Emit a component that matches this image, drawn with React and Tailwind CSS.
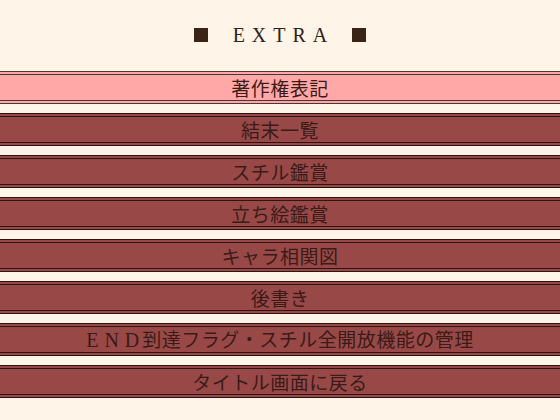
import React from 'react';

const items = [
  { label: '著作権表記', active: true },
  { label: '結末一覧' },
  { label: 'スチル鑑賞' },
  { label: '立ち絵鑑賞' },
  { label: 'キャラ相関図' },
  { label: '後書き' },
  { label: 'END到達フラグ・スチル全開放機能の管理', latin: 'END' },
  { label: 'タイトル画面に戻る' },
];

function MenuBand({ item }) {
  const text = item.latin ? item.label.slice(item.latin.length) : item.label;
  return (
    <div
      className={`h-[33px] flex items-center justify-center border-y-[4px] border-double ${
        item.active
          ? 'bg-[#ffa8a7] border-y-[#4e3434]'
          : 'bg-[#984847] border-y-[#2e1514]'
      }`}
    >
      <span className="text-[19px] leading-none tracking-[0.5px] text-[#3a1b17] font-['Noto_Sans_CJK_JP',sans-serif] -mt-[1px]">
        {item.latin && (
          <span className="font-['Liberation_Serif',serif] text-[20px] tracking-[6px] mr-[-3px]">
            {item.latin}
          </span>
        )}
        {text}
      </span>
    </div>
  );
}

export default function App() {
  return (
    <div className="w-[560px] h-[420px] bg-[#fef4e8] overflow-hidden">
      {/* Title */}
      <div className="h-[71px] flex items-center justify-center pb-[1px]">
        <div className="w-[14px] h-[14px] bg-[#3b2316]" />
        <span className="ml-[25px] mr-[18px] text-[20px] leading-none tracking-[7px] text-[#2f211b] font-['Liberation_Serif',serif]">
          EXTRA
        </span>
        <div className="w-[14px] h-[14px] bg-[#3b2316]" />
      </div>

      {/* Menu */}
      <div className="flex flex-col gap-[9px]">
        {items.map((item, idx) => (
          <MenuBand key={idx} item={item} />
        ))}
      </div>
    </div>
  );
}
